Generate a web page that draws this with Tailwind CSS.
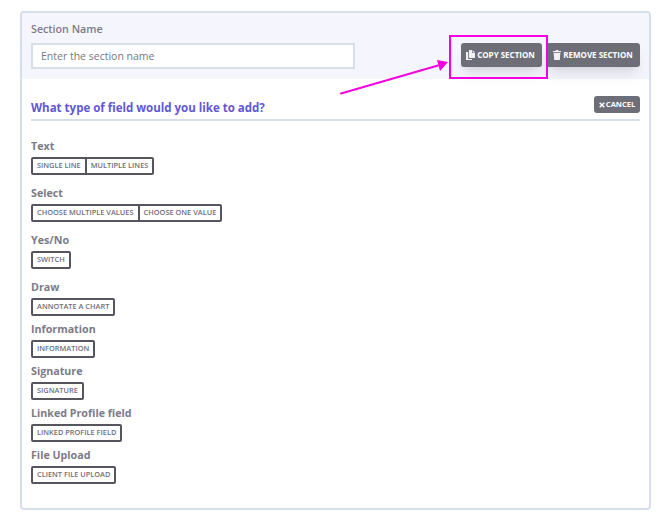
<!DOCTYPE html>
<html lang="en">
<head>
  <meta charset="UTF-8" />
  <title>Section fields</title>
  <script src="https://cdn.jsdelivr.net/npm/@tailwindcss/browser@4"></script>
</head>
<body class="bg-white font-['Open_Sans','Noto_Sans',sans-serif] w-[670px] h-[513px] overflow-hidden relative">
  <div class="ml-[20px] mt-[11px] w-[631px] h-[499px] border-2 border-[#d5deea] rounded-[4px] overflow-hidden">
    <!-- Section name -->
    <div class="bg-[#f5f6fd] h-[66px] px-[9px] pt-[8px] flex justify-between">
      <div>
        <label class="block text-[10.7px] leading-[16px] font-semibold text-[#7b7b88] mb-[6px]">Section Name</label>
        <input class="block w-[324px] h-[26px] bg-white border-2 border-[#d5deea] px-[8px] text-[10.5px] placeholder:text-[#77777f]" placeholder="Enter the section name" />
      </div>
      <div class="flex gap-[4px] mt-[22px] h-[24px]">
        <button class="h-[24px] w-[81px] pr-[2px] bg-[#6e6e78] rounded-[3px] shadow-lg text-white text-[8px] font-bold flex items-center justify-center gap-[2px]">
          <svg class="w-[9px] h-[10px]" viewBox="0 0 9 10" fill="#f1f1f4"><path d="M3 0h3v3h3v5H3z"/><path d="M6.6 0 9 2.4H6.6z"/><path d="M0 2h2.2v7H6v1H0z"/></svg>
          COPY SECTION
        </button>
        <button class="h-[24px] w-[94px] bg-[#6e6e78] rounded-[3px] shadow-lg text-white text-[8px] font-bold flex items-center justify-center gap-[2px]">
          <svg class="w-[8px] h-[10px]" viewBox="0 0 8 10" fill="#f1f1f4"><path d="M0 1h2.4l.5-1h2.2l.5 1H8v1.2H0z"/><path d="M.7 3h6.6l-.5 7H1.2z"/></svg>
          REMOVE SECTION
        </button>
      </div>
    </div>
    <!-- Field types -->
    <div class="px-[9px]">
      <div class="flex justify-between items-center h-[42px] pt-[17px] border-b-2 border-[#d5deea]">
        <h2 class="text-[11.5px] font-bold text-[#6257d6]">What type of field would you like to add?</h2>
        <button class="w-[46px] h-[17px] -mt-[6px] bg-[#6e6e78] rounded-[3px] text-white text-[7.5px] font-bold flex items-center justify-center gap-[1px]">
          <svg class="w-[6px] h-[6px]" viewBox="0 0 6 6" stroke="white" stroke-width="1.5"><path d="M.7.7l4.6 4.6M5.3.7.7 5.3"/></svg>
          CANCEL
        </button>
      </div>
      <div class="mt-[17px] mb-[10px]">
        <div class="text-[10.7px] leading-[16px] font-bold text-[#7b7b88] mb-[3px]">Text</div>
        <div class="flex w-fit h-[18px] border-2 border-[#55555f] rounded-[2px] text-[7.4px] font-semibold text-[#6e6e7c]">
          <span class="px-[4px] flex items-center border-r-2 border-[#55555f]">SINGLE LINE</span>
          <span class="px-[4px] flex items-center">MULTIPLE LINES</span>
        </div>
      </div>
      <div class="mb-[10px]">
        <div class="text-[10.7px] leading-[16px] font-bold text-[#7b7b88] mb-[3px]">Select</div>
        <div class="flex w-fit h-[18px] border-2 border-[#55555f] rounded-[2px] text-[7.4px] font-semibold text-[#6e6e7c]">
          <span class="px-[4px] flex items-center border-r-2 border-[#55555f]">CHOOSE MULTIPLE VALUES</span>
          <span class="px-[4px] flex items-center">CHOOSE ONE VALUE</span>
        </div>
      </div>
      <div class="mb-[10px]">
        <div class="text-[10.7px] leading-[16px] font-bold text-[#7b7b88] mb-[3px]">Yes/No</div>
        <div class="flex w-fit h-[18px] border-2 border-[#55555f] rounded-[2px] px-[4px] items-center text-[7.4px] font-semibold text-[#6e6e7c]">SWITCH</div>
      </div>
      <div class="mb-[5px]">
        <div class="text-[10.7px] leading-[16px] font-bold text-[#7b7b88] mb-[3px]">Draw</div>
        <div class="flex w-fit h-[18px] border-2 border-[#55555f] rounded-[2px] px-[4px] items-center text-[7.4px] font-semibold text-[#6e6e7c]">ANNOTATE A CHART</div>
      </div>
      <div class="mb-[5px]">
        <div class="text-[10.7px] leading-[16px] font-bold text-[#7b7b88] mb-[3px]">Information</div>
        <div class="flex w-fit h-[18px] border-2 border-[#55555f] rounded-[2px] px-[4px] items-center text-[7.4px] font-semibold text-[#6e6e7c]">INFORMATION</div>
      </div>
      <div class="mb-[5px]">
        <div class="text-[10.7px] leading-[16px] font-bold text-[#7b7b88] mb-[3px]">Signature</div>
        <div class="flex w-fit h-[18px] border-2 border-[#55555f] rounded-[2px] px-[4px] items-center text-[7.4px] font-semibold text-[#6e6e7c]">SIGNATURE</div>
      </div>
      <div class="mb-[5px]">
        <div class="text-[10.7px] leading-[16px] font-bold text-[#7b7b88] mb-[3px]">Linked Profile field</div>
        <div class="flex w-fit h-[18px] border-2 border-[#55555f] rounded-[2px] px-[4px] items-center text-[7.4px] font-semibold text-[#6e6e7c]">LINKED PROFILE FIELD</div>
      </div>
      <div>
        <div class="text-[10.7px] leading-[16px] font-bold text-[#7b7b88] mb-[3px]">File Upload</div>
        <div class="flex w-fit h-[18px] border-2 border-[#55555f] rounded-[2px] px-[4px] items-center text-[7.4px] font-semibold text-[#6e6e7c]">CLIENT FILE UPLOAD</div>
      </div>
    </div>
  </div>
  <!-- Annotation -->
  <div class="absolute left-[449px] top-[35px] w-[99px] h-[44px] border-2 border-[#f500e0]"></div>
  <svg class="absolute left-[336px] top-[55px]" width="120" height="45" viewBox="0 0 120 45" fill="#f500e0">
    <path d="M5 38.5 102 10.5" stroke="#f500e0" stroke-width="2" stroke-linecap="round"/>
    <path d="M112 7 101 5 104 16z"/>
  </svg>
</body>
</html>
